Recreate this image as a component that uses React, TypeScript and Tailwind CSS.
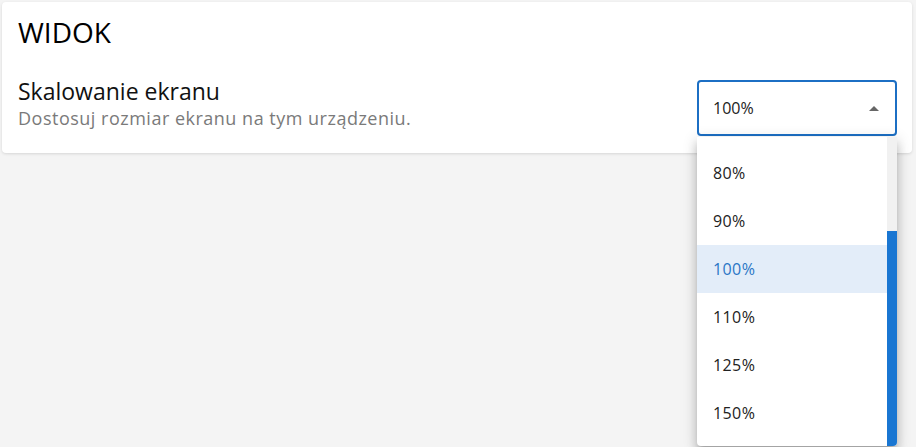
const visible = ["80%", "90%", "100%", "110%", "125%", "150%"]
const selected = "100%"

export default function App() {
  return (
    <div
      className="h-[447px] w-[916px] overflow-hidden bg-[#f4f4f4] pl-[2px] pt-[2px]"
      style={{ fontFamily: '"Open Sans", "Noto Sans", sans-serif' }}
    >
      {/* Settings card */}
      <div className="w-[910px] rounded-[4px] bg-white pb-[17px] pl-4 pr-[15px] pt-[12px] shadow-[0_1px_3px_rgba(0,0,0,0.12)]">
        <h2 className="text-[28px] leading-[36px] text-black">WIDOK</h2>

        <div className="mt-[27px] flex items-start justify-between">
          <div>
            <div className="text-[23px] leading-[28px] text-[#111]">Skalowanie ekranu</div>
            <div className="mt-[1px] text-[18px] leading-[24px] tracking-[0.5px] text-[#7a7a7a]">
              Dostosuj rozmiar ekranu na tym urządzeniu.
            </div>
          </div>

          <div className="relative mt-[3px]">
            <button className="flex h-[56px] w-[200px] items-center justify-between rounded-[4px] border-2 border-[#1c6fc4] pl-[14px] pr-[16px] text-[16px] text-[#222]">
              <span>{selected}</span>
              <svg width="10" height="5" viewBox="0 0 10 5">
                <path d="M0 5 L5 0 L10 5 Z" fill="#666" />
              </svg>
            </button>

            {/* Open dropdown menu */}
            <div className="absolute left-0 top-[57px] z-10 flex h-[309px] w-[200px] overflow-hidden rounded-b-[4px] bg-white shadow-[0_5px_5px_-3px_rgba(0,0,0,0.2),0_8px_10px_1px_rgba(0,0,0,0.14),0_3px_14px_2px_rgba(0,0,0,0.12)]">
              <div className="flex-1 pb-2 pt-[12px]">
                {visible.map((o) => (
                  <div
                    key={o}
                    className={
                      o === selected
                        ? "flex h-[48px] items-center bg-[#e3edf9] pl-4 text-[16px] tracking-[0.4px] text-[#2a76c6]"
                        : "flex h-[48px] items-center pl-4 text-[16px] tracking-[0.4px] text-[#222]"
                    }
                  >
                    {o}
                  </div>
                ))}
              </div>
              {/* scrollbar */}
              <div className="flex w-[10px] flex-col justify-end bg-[#f1f1f1]">
                <div className="h-[215px] bg-[#1976d2]" />
              </div>
            </div>
          </div>
        </div>
      </div>
    </div>
  )
}
